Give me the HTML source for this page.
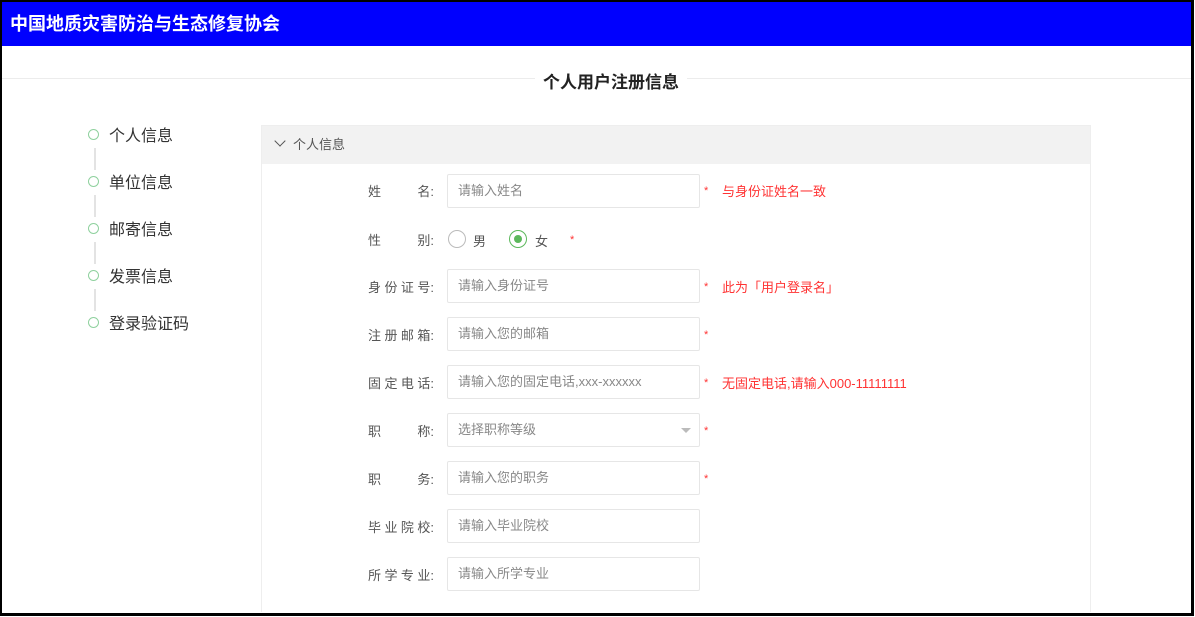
<!DOCTYPE html>
<html style="overflow:hidden;height:617px"><head><meta charset="utf-8"><style>
body{margin:0;width:1195px;height:617px;overflow:hidden;background:#fff;font-family:"Liberation Sans","Noto Sans CJK SC",sans-serif;position:relative}
.frame{position:absolute;left:0;top:0;width:1189px;height:611px;border:2px solid #000;border-right-width:3px;border-bottom-width:3px;z-index:5}
.hdr{position:absolute;left:2px;top:2px;width:1189px;height:44px;background:#0000fe;color:#fff;font-weight:bold;font-size:18px;line-height:44px;padding-left:8px;box-sizing:border-box}
.line{position:absolute;left:2px;right:4px;top:78px;height:1px;background:#ececec}
.title{position:absolute;left:535px;top:68px;padding:0 8px;background:#fff;font-size:17px;font-weight:bold;color:#222}
.step{position:absolute;left:88px;font-size:16px;color:#333}
.step i{display:inline-block;width:9px;height:9px;border:1.5px solid #8fd19e;border-radius:50%;margin-right:10px;vertical-align:1px}
.vl{position:absolute;left:94px;width:2px;height:22px;background:#e3e3e3}
.panel{position:absolute;left:261px;top:125px;width:828px;height:486px;border:1px solid #eee;border-bottom:none}
.ph{height:38px;background:#f2f2f2;font-size:13px;color:#555;line-height:38px;padding-left:14px}
.lbl{position:absolute;left:368px;font-size:13px;color:#555;width:66px;display:flex;justify-content:space-between;white-space:nowrap}
.inp{position:absolute;left:447px;width:253px;height:34px;border:1px solid #e6e6e6;box-sizing:border-box;font-size:13px;color:#888;line-height:32px;padding-left:10px;border-radius:2px}
.star{position:absolute;left:704px;color:#f33;font-size:11px}
.tip{position:absolute;left:722px;color:#f33;font-size:13px}
</style></head><body>
<div class="frame"></div>
<div class="hdr">中国地质灾害防治与生态修复协会</div>
<div class="line"></div>
<div class="title">个人用户注册信息</div>
<div class="step" style="top:122px"><i></i>个人信息</div>
<div class="vl" style="top:148px"></div>
<div class="step" style="top:169px"><i></i>单位信息</div>
<div class="vl" style="top:195px"></div>
<div class="step" style="top:216px"><i></i>邮寄信息</div>
<div class="vl" style="top:242px"></div>
<div class="step" style="top:263px"><i></i>发票信息</div>
<div class="vl" style="top:289px"></div>
<div class="step" style="top:310px"><i></i>登录验证码</div>
<div class="panel"><div class="ph"><span style="display:inline-block;width:7px;height:7px;border-right:1.5px solid #555;border-bottom:1.5px solid #555;transform:rotate(45deg);margin-right:9px;vertical-align:4px"></span>个人信息</div></div>

<div class="lbl" style="top:181px"><span>姓</span><span>名:</span></div><div class="inp" style="top:174px">请输入姓名</div><div class="star" style="top:185px">*</div><div class="tip" style="top:181px">与身份证姓名一致</div>
<div class="lbl" style="top:230px"><span>性</span><span>别:</span></div>
<div style="position:absolute;left:448px;top:230px;width:18px;height:18px;border:1px solid #bbb;border-radius:50%;box-sizing:border-box"></div>
<div style="position:absolute;left:473px;top:231px;font-size:13px;color:#555">男</div>
<div style="position:absolute;left:509px;top:230px;width:18px;height:18px;border:1.5px solid #5cb85c;border-radius:50%;box-sizing:border-box"><div style="width:8px;height:8px;background:#5cb85c;border-radius:50%;margin:3.5px"></div></div>
<div style="position:absolute;left:535px;top:231px;font-size:13px;color:#555">女</div>
<div class="star" style="top:234px;left:570px">*</div>
<div class="lbl" style="top:277px"><span>身</span><span>份</span><span>证</span><span>号:</span></div><div class="inp" style="top:269px">请输入身份证号</div><div class="star" style="top:281px">*</div><div class="tip" style="top:277px">此为「用户登录名」</div>
<div class="lbl" style="top:325px"><span>注</span><span>册</span><span>邮</span><span>箱:</span></div><div class="inp" style="top:317px">请输入您的邮箱</div><div class="star" style="top:329px">*</div>
<div class="lbl" style="top:373px"><span>固</span><span>定</span><span>电</span><span>话:</span></div><div class="inp" style="top:365px">请输入您的固定电话,xxx-xxxxxx</div><div class="star" style="top:377px">*</div><div class="tip" style="top:373px">无固定电话,请输入000-11111111</div>
<div class="lbl" style="top:421px"><span>职</span><span>称:</span></div><div class="inp" style="top:413px">选择职称等级<span style="position:absolute;right:8px;top:14px;border:5px solid transparent;border-top:5px solid #bbb"></span></div><div class="star" style="top:425px">*</div>
<div class="lbl" style="top:469px"><span>职</span><span>务:</span></div><div class="inp" style="top:461px">请输入您的职务</div><div class="star" style="top:473px">*</div>
<div class="lbl" style="top:517px"><span>毕</span><span>业</span><span>院</span><span>校:</span></div><div class="inp" style="top:509px">请输入毕业院校</div>
<div class="lbl" style="top:565px"><span>所</span><span>学</span><span>专</span><span>业:</span></div><div class="inp" style="top:557px">请输入所学专业</div>
</body></html>
